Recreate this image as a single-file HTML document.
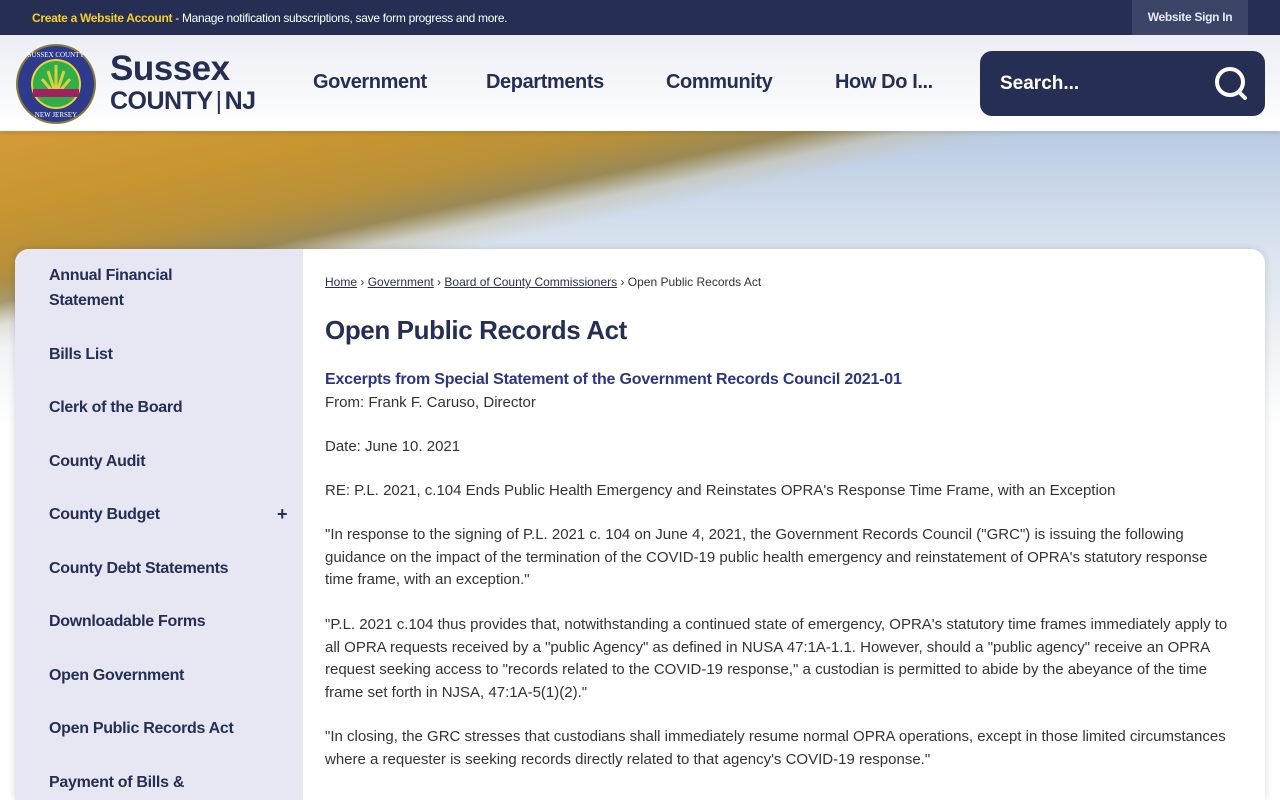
<!DOCTYPE html>
<html><head><meta charset="utf-8"><style>
*{margin:0;padding:0;box-sizing:border-box}
html,body{width:1280px;height:800px;overflow:hidden}
body{font-family:"Liberation Sans",Arial,sans-serif;background:#fff;position:relative}
.top{position:absolute;left:0;top:0;width:1280px;height:35px;background:#262f53;color:#fff;font-size:12px;letter-spacing:-0.3px}
.top .msg{position:absolute;left:32px;top:11px}
.top .msg b{color:#f7cf2b}
.top .sign{position:absolute;left:1132px;top:0;width:116px;height:35px;background:#3c4568;text-align:center;line-height:35px;font-weight:bold;font-size:12px;color:#e6e8f2;letter-spacing:-0.3px}
.hdr{position:absolute;left:0;top:35px;width:1280px;height:96px;background:linear-gradient(#eceef5,#fff);box-shadow:0 2px 4px rgba(0,0,0,.1)}
.logo{position:absolute;left:15px;top:8px}
.brand{position:absolute;left:110px;top:16px;color:#262f53;font-weight:bold}
.brand .s{font-size:35px;line-height:36px;letter-spacing:-0.5px}
.brand .c{font-size:25px;line-height:28px;letter-spacing:-0.5px}
.nav a{position:absolute;top:36px;font-size:20px;font-weight:bold;color:#262f53;text-decoration:none;letter-spacing:-0.4px}
.search{position:absolute;left:980px;top:16px;width:285px;height:65px;background:#262f53;border-radius:12px;color:#fff;font-weight:bold;font-size:19px}
.search span{position:absolute;left:20px;top:22px}
.hero{position:absolute;left:0;top:131px;width:1280px;height:300px;background:
linear-gradient(to bottom,rgba(255,255,255,0) 50%,#fff 100%),
linear-gradient(168deg,#d49a3a 0%,#c89530 14%,#b8903a 24%,#9a8a55 30%,rgba(200,190,160,.5) 34%,rgba(0,0,0,0) 38%),
linear-gradient(180deg,#b9cbe2 0%,#dfe7f1 45%,#e8ecef 100%)}
.card{position:absolute;left:15px;top:249px;width:1250px;height:551px;background:#fff;border-radius:14px 14px 0 0;overflow:hidden;box-shadow:0 0 8px rgba(0,0,0,.15)}
.side{position:absolute;left:0;top:0;width:288px;height:551px;background:#e7e7f4}
.side div{position:absolute;left:34px;font-size:16px;font-weight:bold;color:#262f53;line-height:25px;letter-spacing:-0.3px}
.main{position:absolute;left:310px;top:0;width:915px;color:#333;font-size:15px;line-height:22.6px}
.bc{position:absolute;top:22px;font-size:12px;color:#333}
.bc a{color:#262f53;text-decoration:underline}
h1{position:absolute;top:70px;font-size:26px;color:#262f53;white-space:nowrap;letter-spacing:-0.4px}
h2{position:absolute;top:120px;font-size:16px;color:#2b3582;white-space:nowrap;letter-spacing:-0.2px}
.p{position:absolute;left:0;width:915px}
</style></head><body>
<div class="top"><div class="msg"><b>Create a Website Account</b> - Manage notification subscriptions, save form progress and more.</div><div class="sign">Website Sign In</div></div>
<div class="hero"></div>
<div class="hdr">
<svg class="logo" width="82" height="82" viewBox="0 0 82 82"><circle cx="41" cy="41" r="40" fill="#8a7a3a"/><circle cx="41" cy="41" r="38" fill="#2e3a8c"/><circle cx="41" cy="41" r="25" fill="#f0d040"/><circle cx="41" cy="41" r="23" fill="#2fae4a"/><path d="M41 22v30M33 28l6 18M49 28l-6 18M27 36l10 12M55 36l-10 12" stroke="#d8d040" stroke-width="3"/><rect x="18" y="46" width="46" height="8" fill="#a02060"/><text x="41" y="14" font-size="7" fill="#fff" text-anchor="middle" font-family="Liberation Serif">SUSSEX COUNTY</text><text x="41" y="74" font-size="7" fill="#fff" text-anchor="middle" font-family="Liberation Serif">NEW JERSEY</text></svg>
<div class="brand"><div class="s">Sussex</div><div class="c">COUNTY<span style="font-weight:normal;margin:0 3px">|</span>NJ</div></div>
<div class="nav"><a style="left:313px">Government</a><a style="left:486px">Departments</a><a style="left:666px">Community</a><a style="left:835px">How Do I...</a></div>
<div class="search"><span>Search...</span><svg style="position:absolute;left:233px;top:14px" width="38" height="38" viewBox="0 0 38 38"><circle cx="17" cy="17" r="13" fill="none" stroke="#fff" stroke-width="4"/><path d="M26 27l6 6" stroke="#fff" stroke-width="4" stroke-linecap="round"/></svg></div>
</div>
<div class="card">
<div class="side">
<div style="top:14px">Annual Financial<br>Statement</div>
<div style="top:93px">Bills List</div>
<div style="top:146px">Clerk of the Board</div>
<div style="top:200px">County Audit</div>
<div style="top:253px">County Budget</div>
<div style="top:253px;left:262px;font-size:18px">+</div>
<div style="top:307px">County Debt Statements</div>
<div style="top:360px">Downloadable Forms</div>
<div style="top:414px">Open Government</div>
<div style="top:467px">Open Public Records Act</div>
<div style="top:521px">Payment of Bills &amp;</div>
</div>
<div class="main">
<div class="bc"><a>Home</a> › <a>Government</a> › <a>Board of County Commissioners</a> › Open Public Records Act</div>
<h1>Open Public Records Act</h1>
<h2>Excerpts from Special Statement of the Government Records Council 2021-01</h2>
<div class="p" style="top:143px">From: Frank F. Caruso, Director</div>
<div class="p" style="top:187px">Date: June 10. 2021</div>
<div class="p" style="top:231px">RE: P.L. 2021, c.104 Ends Public Health Emergency and Reinstates OPRA's Response Time Frame, with an Exception</div>
<div class="p" style="top:275px">"In response to the signing of P.L. 2021 c. 104 on June 4, 2021, the Government Records Council ("GRC") is issuing the following guidance on the impact of the termination of the COVID-19 public health emergency and reinstatement of OPRA's statutory response<br>time frame, with an exception."</div>
<div class="p" style="top:365px">"P.L. 2021 c.104 thus provides that, notwithstanding a continued state of emergency, OPRA's statutory time frames immediately apply to all OPRA requests received by a "public Agency" as defined in NUSA 47:1A-1.1. However, should a "public agency" receive an OPRA request seeking access to "records related to the COVID-19 response," a custodian is permitted to abide by the abeyance of the time frame set forth in NJSA, 47:1A-5(1)(2)."</div>
<div class="p" style="top:477px">"In closing, the GRC stresses that custodians shall immediately resume normal OPRA operations, except in those limited circumstances where a requester is seeking records directly related to that agency's COVID-19 response."</div>
</div>
</div>
</body></html>
